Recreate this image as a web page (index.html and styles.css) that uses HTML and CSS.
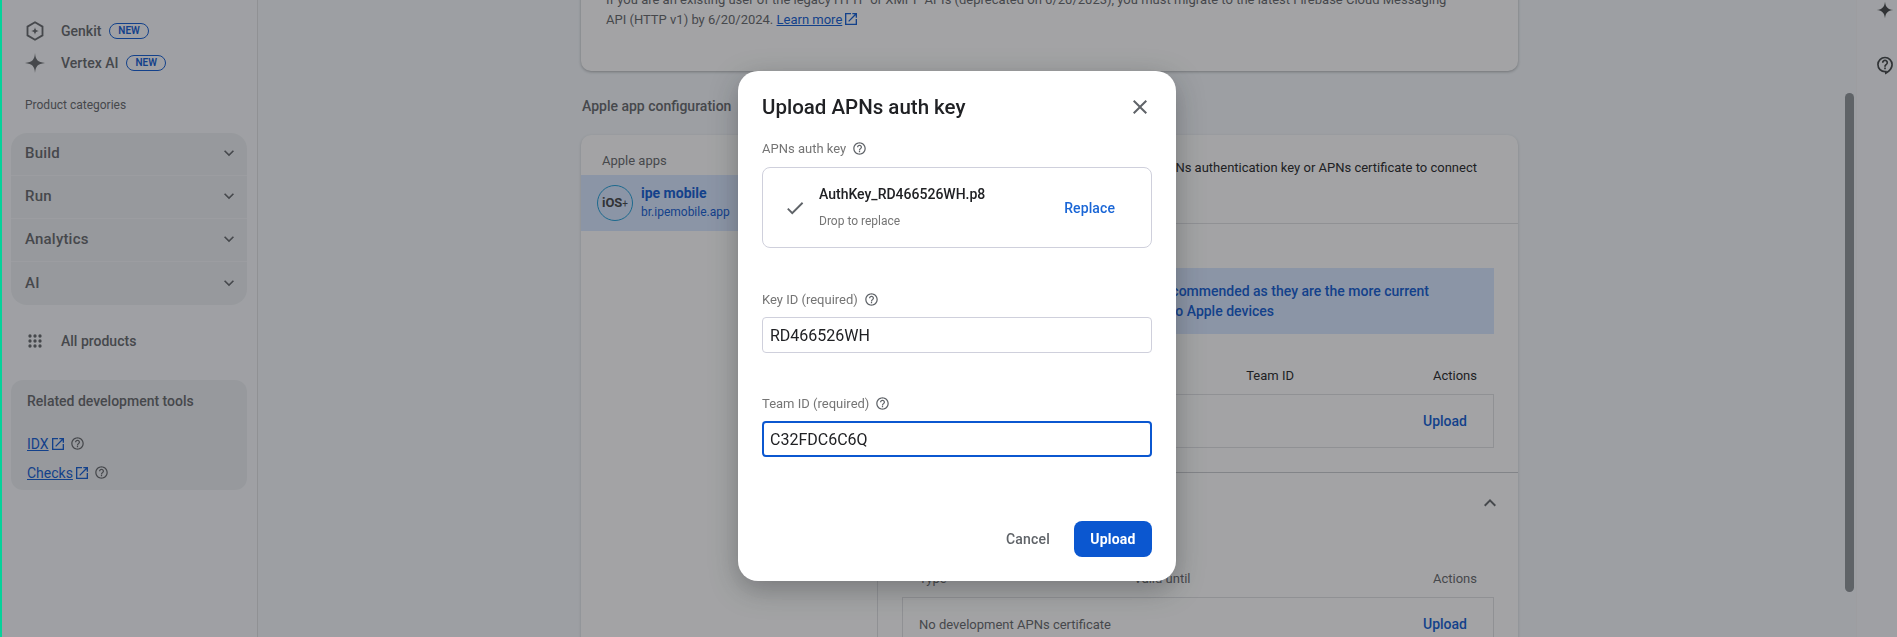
FILE: index.html
```html
<!DOCTYPE html>
<html>
<head>
  <meta charset="UTF-8">
  <title>Upload APNs auth key</title>
  <meta name="viewport" content="width=device-width, initial-scale=1">
  <link rel="stylesheet" href="styles.css">
</head>
<body>
  <svg class="defs" width="0" height="0">
    <symbol id="i-help" viewBox="0 0 24 24"><path d="M11 18h2v-2h-2v2zm1-16C6.48 2 2 6.48 2 12s4.48 10 10 10 10-4.48 10-10S17.52 2 12 2zm0 18c-4.41 0-8-3.59-8-8s3.59-8 8-8 8 3.59 8 8-3.59 8-8 8zm0-14c-2.21 0-4 1.79-4 4h2c0-1.1.9-2 2-2s2 .9 2 2c0 2-3 1.75-3 5h2c0-2.25 3-2.5 3-5 0-2.21-1.79-4-4-4z"/></symbol>
    <symbol id="i-open" viewBox="0 0 24 24"><path d="M19 19H5V5h7V3H3v18h18v-9h-2v7zM14 3v2h3.59l-9.83 9.83 1.41 1.41L19 6.41V10h2V3h-7z"/></symbol>
    <symbol id="i-down" viewBox="0 0 24 24"><path d="M16.59 8.59 12 13.17 7.41 8.59 6 10l6 6 6-6z"/></symbol>
    <symbol id="i-up" viewBox="0 0 24 24"><path d="M7.41 15.41 12 10.83l4.59 4.58L18 14l-6-6-6 6z"/></symbol>
  </svg>

  <div class="strip"></div>

  <aside class="sidebar">
    <div class="nav-row">
      <svg class="nav-icon" viewBox="0 0 24 24"><path d="M12 1.500 21 6.700v10.600L12 22.500 3 17.300V6.700z" fill="none" stroke="#5f6368" stroke-width="2.200"/><path d="M12 7.500c.5 3 1.500 4 4.500 4.500-3 .5-4 1.500-4.500 4.500-.5-3-1.500-4-4.500-4.500 3-.5 4-1.500 4.500-4.500z" fill="#5f6368"/></svg>
      <span>Genkit</span><span class="badge">NEW</span>
    </div>
    <div class="nav-row">
      <svg class="nav-icon" viewBox="0 0 24 24"><path d="M12 0c.6 8 3 11 12 12-9 1-11.400 4-12 12-.6-8-3-11-12-12 9-1 11.400-4 12-12z" fill="#5f6368"/></svg>
      <span>Vertex AI</span><span class="badge">NEW</span>
    </div>

    <div class="nav-caption">Product categories</div>
    <div class="accordion">
      <div class="acc-row">Build<svg class="chev" viewBox="0 0 24 24"><use href="#i-down"/></svg></div>
      <div class="acc-row">Run<svg class="chev" viewBox="0 0 24 24"><use href="#i-down"/></svg></div>
      <div class="acc-row">Analytics<svg class="chev" viewBox="0 0 24 24"><use href="#i-down"/></svg></div>
      <div class="acc-row">AI<svg class="chev" viewBox="0 0 24 24"><use href="#i-down"/></svg></div>
    </div>

    <div class="nav-row all-products">
      <svg class="nav-icon" viewBox="0 0 24 24" fill="#5f6368">
        <circle cx="6" cy="6" r="2"/><circle cx="12" cy="6" r="2"/><circle cx="18" cy="6" r="2"/>
        <circle cx="6" cy="12" r="2"/><circle cx="12" cy="12" r="2"/><circle cx="18" cy="12" r="2"/>
        <circle cx="6" cy="18" r="2"/><circle cx="12" cy="18" r="2"/><circle cx="18" cy="18" r="2"/>
      </svg>
      <span>All products</span>
    </div>

    <div class="tools">
      <div class="tools-title">Related development tools</div>
      <div class="tool-link first"><a href="#">IDX</a><svg class="ext" viewBox="0 0 24 24"><use href="#i-open"/></svg><svg class="help" viewBox="0 0 24 24"><use href="#i-help"/></svg></div>
      <div class="tool-link"><a href="#">Checks</a><svg class="ext" viewBox="0 0 24 24"><use href="#i-open"/></svg><svg class="help" viewBox="0 0 24 24"><use href="#i-help"/></svg></div>
    </div>
  </aside>

  <main class="main">
    <div class="content">
      <section class="notice">
        <p>If you are an existing user of the legacy HTTP or XMPP APIs (deprecated on 6/20/2023), you must migrate to the latest Firebase Cloud Messaging<br>API (HTTP v1) by 6/20/2024. <a href="#">Learn more</a><svg class="ext" viewBox="0 0 24 24"><use href="#i-open"/></svg></p>
      </section>

      <h4 class="section-title">Apple app configuration</h4>

      <section class="apple-card">
        <div class="apps-col">
          <div class="apps-head">Apple apps</div>
          <div class="app-row">
            <div class="ios-logo">iOS<small>+</small></div>
            <div>
              <div class="app-name">ipe mobile</div>
              <div class="app-id">br.ipemobile.app</div>
            </div>
          </div>
        </div>

        <div class="detail-col">
          <div class="intro">
            <p>Upload your APNs authentication key or APNs certificate to connect</p>
          </div>

          <div class="keys">
            <div class="banner">
              <div>APNs authentication keys are recommended as they are the more current</div>
              <div class="banner-second">way to send notifications to Apple devices</div>
            </div>
            <div class="table-head">
              <span>Key name</span><span class="col-team">Team ID</span><span class="col-actions">Actions</span>
            </div>
            <div class="table-box">
              <span>No APNs authentication key</span><a href="#">Upload</a>
            </div>
          </div>

          <div class="certs">
            <div class="certs-head">
              <span>APNs certificates</span>
              <svg class="chev-up" viewBox="0 0 24 24"><use href="#i-up"/></svg>
            </div>
            <div class="table-head muted">
              <span>Type</span><span class="col-valid">Valid until</span><span class="col-actions">Actions</span>
            </div>
            <div class="table-box">
              <span>No development APNs certificate</span><a href="#">Upload</a>
            </div>
          </div>
        </div>
      </section>
    </div>
  </main>

  <div class="rail">
    <svg class="rail-spark" viewBox="0 0 24 24"><path d="M12 1c.8 7 3.500 10 11 11-7.500 1-10.200 4-11 11-.8-7-3.500-10-11-11 7.500-1 10.200-4 11-11z" fill="#3c4043"/></svg>
    <svg class="rail-help" viewBox="0 0 24 24"><path d="M12 2a9.500 9.500 0 0 0 0 19v2.500c5-2.500 9.500-6.500 9.500-12A9.500 9.500 0 0 0 12 2zm0 2a7.500 7.500 0 0 1 7.500 7.500c0 3.500-2.500 6.500-5.500 8.400V19h-2a7.500 7.500 0 0 1 0-15zm-1 11h2v2h-2zm1-9.500c-2.100 0-3.700 1.600-3.700 3.700h2c0-1 .7-1.700 1.700-1.700s1.700.7 1.700 1.700c0 1.800-2.700 1.600-2.700 5h2c0-2.300 2.700-2.600 2.700-5 0-2.100-1.600-3.700-3.700-3.700z" fill="#3c4043"/></svg>
  </div>

  <div class="scrim"></div>
  <div class="scrollbar"></div>

  <div class="modal">
    <div class="modal-head">
      <h2>Upload APNs auth key</h2>
      <svg class="close" viewBox="0 0 24 24"><path d="M19 6.410 17.590 5 12 10.590 6.410 5 5 6.410 10.590 12 5 17.590 6.410 19 12 13.410 17.590 19 19 17.590 13.410 12z"/></svg>
    </div>

    <div class="field-label first">APNs auth key<svg class="help" viewBox="0 0 24 24"><use href="#i-help"/></svg></div>
    <div class="dropzone">
      <svg class="check" viewBox="0 0 24 24"><path d="M9 16.170 4.830 12l-1.420 1.410L9 19 21 7l-1.410-1.410z"/></svg>
      <div class="file-info">
        <div class="file-name">AuthKey_RD466526WH.p8</div>
        <div class="file-hint">Drop to replace</div>
      </div>
      <a class="replace" href="#">Replace</a>
    </div>

    <div class="field-label key-label">Key ID (required)<svg class="help" viewBox="0 0 24 24"><use href="#i-help"/></svg></div>
    <input class="text-input" type="text" value="RD466526WH">

    <div class="field-label team-label">Team ID (required)<svg class="help" viewBox="0 0 24 24"><use href="#i-help"/></svg></div>
    <input class="text-input focused" type="text" value="C32FDC6C6Q">

    <div class="modal-foot">
      <button class="btn-cancel">Cancel</button>
      <button class="btn-upload">Upload</button>
    </div>
  </div>
</body>
</html>
```

FILE: styles.css
```css
* {
  box-sizing: border-box;
}
html, body {
  height: 100%;
}
body {
  margin: 0;
  display: flex;
  overflow: hidden;
  font-family: Roboto, "Liberation Sans", sans-serif;
  font-size: 13px;
  color: #202124;
  background: #f0f4f9;
}
p {
  margin: 0;
}
a {
  color: #0b57d0;
}
.defs {
  position: absolute;
}

/* stays bright, it sits above the scrim */
.strip {
  position: relative;
  z-index: 1;
  width: 2px;
  flex: none;
  background: #06d29a;
}

/* sidebar */
.sidebar {
  width: 256px;
  flex: none;
  padding: 15px 0 0 0;
  border-right: 1px solid #dadce0;
  background: #f3f6fa;
}
.nav-row {
  display: flex;
  align-items: center;
  height: 32px;
  padding-left: 23px;
  font-size: 14px;
  font-weight: 500;
  color: #5f6368;
}
.nav-icon {
  width: 20px;
  height: 20px;
  margin-right: 16px;
  flex: none;
}
.badge {
  margin-left: 8px;
  padding: 0 8px;
  height: 16px;
  line-height: 14px;
  border: 1px solid #0b57d0;
  border-radius: 8px;
  font-size: 10px;
  font-weight: 600;
  color: #0b57d0;
}
.nav-caption {
  margin: 16px 0 18px 23px;
  line-height: 20px;
  font-size: 12px;
  color: #5f6368;
}
.accordion {
  margin-left: 9px;
  width: 236px;
  border-radius: 16px;
  background: #e7eaef;
  overflow: hidden;
}
.acc-row {
  display: flex;
  align-items: center;
  justify-content: space-between;
  height: 43px;
  padding: 0 8px 2px 14px;
  font-size: 15px;
  font-weight: 500;
  letter-spacing: .2px;
  color: #5f6368;
  border-bottom: 1px solid #eff1f5;
}
.acc-row:last-child {
  border-bottom: 0;
}
.chev {
  width: 20px;
  height: 20px;
  fill: #5f6368;
}
.all-products {
  margin-top: 20px;
}
.tools {
  margin: 23px 0 0 9px;
  width: 236px;
  height: 110px;
  padding: 11px 16px;
  border-radius: 12px;
  background: #e7eaef;
}
.tools-title {
  line-height: 20px;
  font-size: 14px;
  font-weight: 500;
  color: #5f6368;
}
.tool-link {
  display: flex;
  align-items: center;
  height: 29px;
  font-size: 14px;
}
.tool-link.first {
  margin-top: 18px;
}
.tool-link .help {
  margin-left: 4px;
}
.ext {
  width: 16px;
  height: 16px;
  margin-left: 1px;
  fill: #0b57d0;
  vertical-align: -3px;
}
.help {
  width: 15px;
  height: 15px;
  margin-left: 6px;
  fill: #5f6368;
  flex: none;
}

/* page content */
.main {
  flex: 1;
  min-width: 0;
}
.content {
  width: 937px;
  margin: -60px 0 0 323px;
}
.notice {
  height: 131px;
  padding: 50px 25px 0;
  border-radius: 0 0 10px 10px;
  background: #fafbfc;
  box-shadow: 0 1px 3px rgba(60, 64, 67, .4);
  line-height: 20px;
  color: #5f6368;
}
.section-title {
  margin: 25px 0 19px 1px;
  line-height: 20px;
  font-size: 14px;
  font-weight: 500;
  color: #5f6368;
}
.apple-card {
  display: flex;
  height: 520px;
  border-radius: 10px 10px 0 0;
  background: #fafbfc;
  box-shadow: 0 1px 3px rgba(60, 64, 67, .25);
}
.apps-col {
  width: 297px;
  flex: none;
  border-right: 1px solid #dadce0;
}
.apps-head {
  height: 40px;
  padding: 16px 0 0 21px;
  line-height: 20px;
  color: #5f6368;
}
.app-row {
  display: flex;
  align-items: center;
  height: 56px;
  padding-left: 16px;
  background: #d3e3fd;
}
.ios-logo {
  width: 36px;
  height: 36px;
  margin-right: 8px;
  border: 1px solid #1a9ad6;
  border-radius: 50%;
  text-align: center;
  line-height: 34px;
  font-size: 13px;
  font-weight: 700;
  color: #3c4043;
}
.ios-logo small {
  font-size: 10px;
  font-weight: 400;
}
.app-name {
  font-size: 14px;
  font-weight: 700;
  line-height: 19px;
  color: #0b57d0;
}
.app-id {
  font-size: 12px;
  line-height: 19px;
  color: #0b57d0;
}
.detail-col {
  flex: 1;
  min-width: 0;
}
.intro {
  height: 89px;
  padding: 23px 41px 0 24px;
  border-bottom: 1px solid #dadce0;
  line-height: 20px;
  text-align: right;
}
.keys {
  height: 249px;
  padding: 44px 24px 0;
  border-bottom: 1px solid #c4c7cc;
}
.banner {
  height: 66px;
  padding: 13px 65px 0 0;
  background: #d3e3fd;
  line-height: 20px;
  font-size: 14px;
  font-weight: 500;
  color: #0b57d0;
  text-align: right;
  white-space: nowrap;
}
.banner-second {
  padding-right: 155px;
}
.table-head {
  display: flex;
  margin-top: 32px;
  padding: 0 17px;
  line-height: 20px;
}
.table-head.muted {
  margin-top: 54px;
  color: #5f6368;
}
.col-team {
  margin-left: auto;
  margin-right: 139px;
}
.col-valid {
  margin-left: 187px;
}
.col-actions {
  margin-left: auto;
}
.col-team + .col-actions {
  margin-left: 0;
}
.table-box {
  display: flex;
  align-items: center;
  justify-content: space-between;
  height: 54px;
  margin-top: 8px;
  padding: 0 26px 0 16px;
  border: 1px solid #dadce0;
  color: #5f6368;
}
.table-box a {
  font-size: 14px;
  font-weight: 500;
  text-decoration: none;
}
.certs {
  padding: 18px 24px 0;
}
.certs-head {
  display: flex;
  justify-content: space-between;
  align-items: center;
  height: 24px;
  color: #5f6368;
}
.chev-up {
  width: 24px;
  height: 24px;
  margin-right: -8px;
  fill: #5f6368;
}

/* right rail */
.rail {
  width: 41px;
  flex: none;
  border-left: 1px solid #f0f1f3;
  background: #f3f6fa;
  padding-left: 19px;
}
.rail-spark {
  display: block;
  width: 18px;
  height: 18px;
  margin-top: 1px;
}
.rail-help {
  display: block;
  width: 20px;
  height: 20px;
  margin-top: 36px;
  margin-left: -1px;
}

/* dialog on top of the page */
.scrim {
  position: fixed;
  inset: 0;
  background: rgba(32, 33, 36, .4);
}
.scrollbar {
  position: fixed;
  left: 1845px;
  top: 93px;
  width: 9px;
  height: 499px;
  border-radius: 5px;
  background: #5f6367;
}
.modal {
  position: fixed;
  left: 738px;
  top: 71px;
  width: 438px;
  height: 510px;
  padding: 24px 24px 0;
  border-radius: 20px;
  background: #fff;
  box-shadow: 0 8px 28px rgba(32, 33, 36, .35);
}
.modal-head {
  display: flex;
  align-items: center;
  justify-content: space-between;
  height: 24px;
}
.modal-head h2 {
  margin: 0;
  font-size: 20.500px;
  font-weight: 500;
  color: #202124;
}
.close {
  width: 24px;
  height: 24px;
  fill: #5f6368;
}
.field-label {
  display: flex;
  align-items: center;
  height: 18px;
  font-size: 13px;
  color: #757575;
}
.field-label.first {
  margin-top: 20px;
}
.key-label {
  margin-top: 42px;
}
.team-label {
  margin-top: 41px;
}
.dropzone {
  display: flex;
  align-items: center;
  height: 81px;
  margin-top: 10px;
  padding: 0 36px 0 21px;
  border: 1px solid #cfd0dc;
  border-radius: 8px;
}
.check {
  width: 22px;
  height: 22px;
  margin-right: 13px;
  fill: #5f6368;
  flex: none;
}
.file-info {
  flex: 1;
}
.file-name {
  font-size: 14px;
  font-weight: 500;
  line-height: 18px;
  margin-bottom: 9px;
}
.file-hint {
  font-size: 12px;
  line-height: 18px;
  color: #757575;
}
.replace {
  font-size: 14px;
  font-weight: 500;
  letter-spacing: .1px;
  color: #1a66d6;
  text-decoration: none;
}
.text-input {
  display: block;
  width: 100%;
  height: 36px;
  margin-top: 9px;
  padding: 0 7px;
  border: 1px solid #cfd0dc;
  border-radius: 4px;
  outline: 0;
  font-family: Roboto, sans-serif;
  font-size: 16px;
  color: #202124;
}
.text-input.focused {
  border: 2px solid #0b57d0;
  padding: 0 6px;
}
.modal-foot {
  display: flex;
  align-items: center;
  justify-content: flex-end;
  margin-top: 64px;
}
.btn-cancel {
  margin-right: 24px;
  padding: 0;
  border: 0;
  background: none;
  font-family: Roboto, sans-serif;
  font-size: 14px;
  font-weight: 500;
  letter-spacing: .2px;
  color: #5f6368;
}
.btn-upload {
  width: 78px;
  height: 36px;
  border: 0;
  border-radius: 8px;
  background: #0b57d0;
  font-family: Roboto, sans-serif;
  font-size: 14px;
  font-weight: 700;
  letter-spacing: .2px;
  color: #fff;
}
```
